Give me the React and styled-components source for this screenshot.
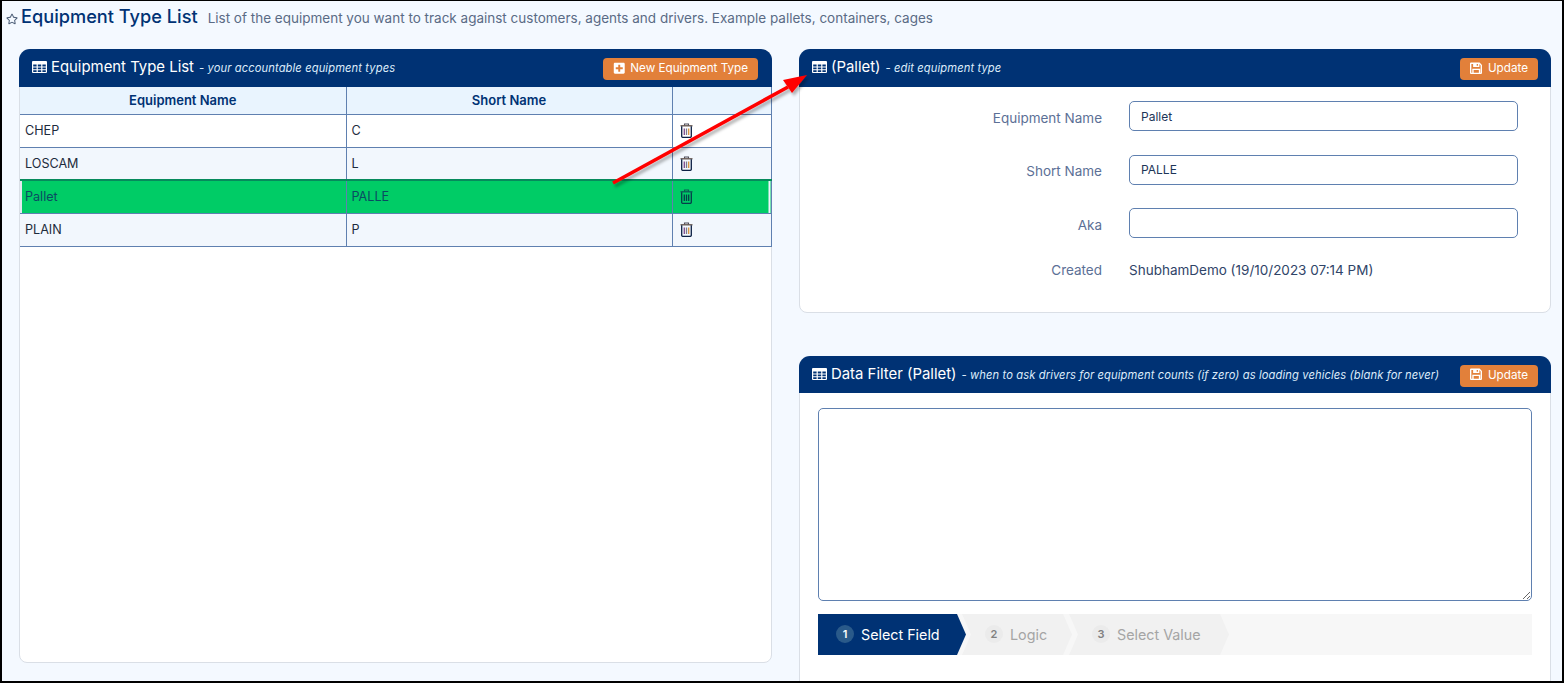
import React from 'react';
import styled, { createGlobalStyle } from 'styled-components';
import { FaRegStar, FaPlusSquare } from 'react-icons/fa';

const GlobalStyle = createGlobalStyle`
  html, body {
    margin: 0;
    padding: 0;
    height: 683px;
    overflow: hidden;
    background: #f4f9ff;
  }
  * { box-sizing: border-box; }
`;

const NAVY = '#003274';
const LINE = '#5f80b0';
const GREEN = '#00cc66';

const Page = styled.div`
  position: relative;
  width: 1564px;
  height: 683px;
  border: 2px solid #000;
  border-top-width: 1px;
  background: #f4f9ff;
  font-family: Inter, "Liberation Sans", sans-serif;
  color: #1d2b3c;
  overflow: hidden;
`;

const TitleRow = styled.div`
  display: flex;
  align-items: baseline;
  height: 48px;
  padding: 4px 0 0 4px;
`;

const StarIcon = styled(FaRegStar)`
  width: 12px;
  height: 12px;
  margin-right: 3px;
  color: #4d5f78;
  align-self: flex-start;
  margin-top: 8px;
`;

const Title = styled.h1`
  margin: 0;
  font-size: 18.2px;
  font-weight: 500;
  color: ${NAVY};
`;

const Subtitle = styled.span`
  margin-left: 10px;
  font-size: 13.5px;
  font-weight: 400;
  color: #5a6b85;
`;

const Columns = styled.div`
  display: grid;
  grid-template-columns: 753px 752px;
  column-gap: 27px;
  padding-left: 17px;
  align-items: start;
`;

const Stack = styled.div`
  display: flex;
  flex-direction: column;
  gap: 43px;
`;

const Panel = styled.section`
  height: ${(p) => p.$height}px;
  background: #fff;
  border: 1px solid #dadfe6;
  border-radius: 11px 11px 8px 8px;
`;

const PanelHead = styled.header`
  display: flex;
  align-items: center;
  justify-content: space-between;
  height: ${(p) => p.$height || 38}px;
  margin: -1px -1px 0;
  padding: 0 ${(p) => p.$right || 13}px 2px 13px;
  background: ${NAVY};
  border-radius: 11px 11px 0 0;
  color: #fff;
`;

const HeadTitle = styled.div`
  display: flex;
  align-items: baseline;
  white-space: nowrap;
  font-size: 14.9px;
  font-weight: 400;
`;

const GridSvg = styled.svg`
  width: 15px;
  height: 12px;
  margin-right: 4px;
  align-self: center;
  flex: none;
`;

const GridIcon = () => (
  <GridSvg viewBox="0 0 15 12">
    <path
      fill="#fff"
      fillRule="evenodd"
      d="M1 0h13a1 1 0 0 1 1 1v10a1 1 0 0 1-1 1H1a1 1 0 0 1-1-1V1a1 1 0 0 1 1-1zM1.2 3.6v1.8h3.4V3.6zm4.6 0v1.8h3.4V3.6zm4.6 0v1.8h3.4V3.6zM1.2 6.5v1.8h3.4V6.5zm4.6 0v1.8h3.4V6.5zm4.6 0v1.8h3.4V6.5zM1.2 9.3v1.6h3.4V9.3zm4.6 0v1.6h3.4V9.3zm4.6 0v1.6h3.4V9.3z"
    />
  </GridSvg>
);

const SaveIcon = () => (
  <svg viewBox="0 0 12 12">
    <path
      fill="#fff"
      fillRule="evenodd"
      d="M1 .5h8.2L11.5 2.8V10.5a1 1 0 0 1-1 1H1a1 1 0 0 1-1-1v-9a1 1 0 0 1 1-1zM1.3 1.8v8.4h.9V6.4h7.6v3.8h.4V3.3L9 1.8v2.9H3V1.8zM3.5 7.6v2.6h5V7.6zM6.4 2h1.3v1.7H6.4z"
    />
  </svg>
);

const HeadNote = styled.em`
  margin-left: 5px;
  font-size: 11.2px;
  letter-spacing: 0.1px;
  color: #dcebfa;
`;

const ActionButton = styled.button`
  display: flex;
  align-items: center;
  gap: 5px;
  height: 22px;
  margin-top: 4px;
  padding: 0 10px 2px;
  border: 0;
  border-radius: 4px;
  background: #e2803a;
  color: #fff;
  font-family: inherit;
  font-size: 11.7px;
  white-space: nowrap;
  svg { width: 12.5px; height: 12.5px; flex: none; }
`;

const Table = styled.table`
  width: 751px;
  border-collapse: collapse;
  table-layout: fixed;
  font-size: 12.6px;
`;

const Th = styled.th`
  height: 27px;
  padding: 0;
  border: 1px solid ${LINE};
  border-top: 0;
  border-left: ${(p) => (p.$first ? 0 : undefined)};
  background: #e9f4fe;
  color: ${NAVY};
  font-size: 13px;
  font-weight: 600;
  text-align: center;
`;

const Row = styled.tr`
  height: 33px;
  background: ${(p) => (p.$odd ? '#f2f7fd' : '#fff')};
`;

// the selected row stops short of the table's outer edges
const activeFill = (p) => {
  if (!p.$active) return '';
  if (p.$first) return `background: linear-gradient(to right, #e4eaf2 2px, ${GREEN} 2px);`;
  if (p.$last) return `background: linear-gradient(to left, #eef4fb 2px, ${GREEN} 2px);`;
  return `background: ${GREEN};`;
};

const Td = styled.td`
  padding: 0 5px;
  border: 1px solid ${LINE};
  border-left: ${(p) => (p.$first ? 0 : undefined)};
  color: ${(p) => (p.$active ? '#0b4b63' : '#1d2b3c')};
  ${(p) => p.$active && 'border-top: 2px solid #078a5c;'}
  ${activeFill}
`;

const BinSvg = styled.svg`
  display: block;
  width: 13px;
  height: 15px;
  margin: 0 0 0 2px;
`;

const Bin = ({ active }) => (
  <BinSvg viewBox="0 0 13 15">
    <path d="M4.5 2.5V1h4v1.5" fill="none" stroke={active ? '#0a5a55' : '#4f4d58'} strokeWidth="1.1" />
    <path d="M0.5 2.8h12" stroke={active ? '#0a5a55' : '#5f5048'} strokeWidth="1.3" />
    <path d="M1.7 3.2v10a1.2 1.2 0 0 0 1.2 1.2h7.2a1.2 1.2 0 0 0 1.2-1.2v-10" fill="none" stroke={active ? '#063c4a' : '#0c1f44'} strokeWidth="1.3" />
    <path d="M4.3 5.5v6.5" stroke={active ? '#063c4a' : '#7d4a8c'} strokeWidth="1.3" />
    <path d="M6.5 5.5v6.5" stroke={active ? '#063c4a' : '#7a7a8c'} strokeWidth="1.3" />
    <path d="M8.7 5.5v6.5" stroke={active ? '#063c4a' : '#d8923a'} strokeWidth="1.3" />
  </BinSvg>
);

const Form = styled.div`
  display: grid;
  grid-template-columns: 302px 389px;
  column-gap: 27px;
  row-gap: 23.5px;
  align-items: center;
  padding-top: 14px;
`;

const Label = styled.label`
  padding-top: ${(p) => (p.$static ? 0 : 3)}px;
  margin-top: ${(p) => (p.$static ? -1 : 0)}px;
  text-align: right;
  font-size: 13.5px;
  color: #5c7096;
`;

const Field = styled.input`
  height: 30px;
  padding: 0 11px;
  border: 1px solid ${LINE};
  border-radius: 5px;
  background: #fff;
  font-family: inherit;
  font-size: 12px;
  color: #1d3557;
`;

const Value = styled.div`
  height: 18px;
  margin-top: -1px;
  font-size: 13.5px;
  line-height: 18px;
  color: #2f4468;
`;

const FilterBody = styled.div`
  padding: 15px 18px 0;
`;

const FilterBox = styled.textarea`
  display: block;
  width: 714px;
  height: 193px;
  border: 1px solid ${LINE};
  border-radius: 5px;
  background: #fff;
`;

const Wizard = styled.ol`
  display: flex;
  width: 714px;
  height: 41px;
  margin: 13px 0 0;
  padding: 0;
  list-style: none;
  background: #f7f7f7;
`;

const Step = styled.li`
  display: flex;
  align-items: center;
  gap: 7px;
  width: ${(p) => p.$width}px;
  margin-right: ${(p) => p.$gap}px;
  padding-left: ${(p) => p.$pad}px;
  background: ${(p) => (p.$current ? NAVY : '#f1f1f1')};
  color: ${(p) => (p.$current ? '#fff' : '#a5a5a5')};
  font-size: 14.3px;
  clip-path: polygon(0 0, calc(100% - 9px) 0, 100% 50%, calc(100% - 9px) 100%, 0 100%, ${(p) => (p.$current ? '0 50%' : '9px 50%')});
`;

const StepNo = styled.span`
  display: flex;
  align-items: center;
  justify-content: center;
  width: 18px;
  height: 18px;
  margin-top: -2px;
  border-radius: 50%;
  background: ${(p) => (p.$current ? '#2a5a8a' : '#ebebeb')};
  color: ${(p) => (p.$current ? '#fff' : '#808080')};
  font-size: 11px;
  font-weight: 600;
`;

const ArrowOverlay = styled.svg`
  position: absolute;
  left: 600px;
  top: 60px;
  width: 220px;
  height: 140px;
  pointer-events: none;
`;

const rows = [
  { name: 'CHEP', short: 'C' },
  { name: 'LOSCAM', short: 'L', odd: true },
  { name: 'Pallet', short: 'PALLE', active: true },
  { name: 'PLAIN', short: 'P', odd: true },
];

const steps = [
  { no: 1, label: 'Select Field', width: 148, gap: -4, pad: 18, current: true },
  { no: 2, label: 'Logic', width: 110, gap: -3, pad: 23 },
  { no: 3, label: 'Select Value', width: 160, gap: -3, pad: 23 },
];

export default function App() {
  return (
    <Page>
      <GlobalStyle />
      <TitleRow>
        <StarIcon />
        <Title>Equipment Type List</Title>
        <Subtitle>List of the equipment you want to track against customers, agents and drivers. Example pallets, containers, cages</Subtitle>
      </TitleRow>
      <Columns>
        <Panel $height={614}>
          <PanelHead $right={14}>
            <HeadTitle>
              <GridIcon />
              Equipment Type List
              <HeadNote>- your accountable equipment types</HeadNote>
            </HeadTitle>
            <ActionButton>
              <FaPlusSquare />
              New Equipment Type
            </ActionButton>
          </PanelHead>
          <Table>
            <colgroup>
              <col style={{ width: 326 }} />
              <col style={{ width: 326 }} />
              <col style={{ width: 99 }} />
            </colgroup>
            <thead>
              <tr>
                <Th $first>Equipment Name</Th>
                <Th>Short Name</Th>
                <Th />
              </tr>
            </thead>
            <tbody>
              {rows.map((r) => (
                <Row key={r.name} $odd={r.odd}>
                  <Td $first $active={r.active}>{r.name}</Td>
                  <Td $active={r.active}>{r.short}</Td>
                  <Td $last $active={r.active}><Bin active={r.active} /></Td>
                </Row>
              ))}
            </tbody>
          </Table>
        </Panel>
        <Stack>
          <Panel $height={264}>
            <PanelHead>
              <HeadTitle>
                <GridIcon />
                (Pallet)
                <HeadNote>- edit equipment type</HeadNote>
              </HeadTitle>
              <ActionButton>
                <SaveIcon />
                Update
              </ActionButton>
            </PanelHead>
            <Form>
              <Label>Equipment Name</Label>
              <Field defaultValue="Pallet" />
              <Label>Short Name</Label>
              <Field defaultValue="PALLE" />
              <Label>Aka</Label>
              <Field />
              <Label $static>Created</Label>
              <Value>ShubhamDemo (19/10/2023 07:14 PM)</Value>
            </Form>
          </Panel>
          <Panel $height={360}>
            <PanelHead $height={37}>
              <HeadTitle>
                <GridIcon />
                Data Filter (Pallet)
                <HeadNote>- when to ask drivers for equipment counts (if zero) as loading vehicles (blank for never)</HeadNote>
              </HeadTitle>
              <ActionButton>
                <SaveIcon />
                Update
              </ActionButton>
            </PanelHead>
            <FilterBody>
              <FilterBox />
              <Wizard>
                {steps.map((s) => (
                  <Step key={s.no} $width={s.width} $gap={s.gap} $pad={s.pad} $current={s.current}>
                    <StepNo $current={s.current}>{s.no}</StepNo>
                    {s.label}
                  </Step>
                ))}
              </Wizard>
            </FilterBody>
          </Panel>
        </Stack>
      </Columns>
      <ArrowOverlay viewBox="0 0 220 140">
        <defs>
          <filter id="arrowShadow" x="-10%" y="-10%" width="120%" height="130%">
            <feDropShadow dx="2" dy="3" stdDeviation="1.5" floodColor="#000" floodOpacity="0.3" />
          </filter>
        </defs>
        <g filter="url(#arrowShadow)">
          <line x1="11" y1="122" x2="186" y2="26" stroke="#ff0000" strokeWidth="3.6" />
          <polygon points="205,14 181,19 190,32" fill="#ff0000" />
        </g>
      </ArrowOverlay>
    </Page>
  );
}
